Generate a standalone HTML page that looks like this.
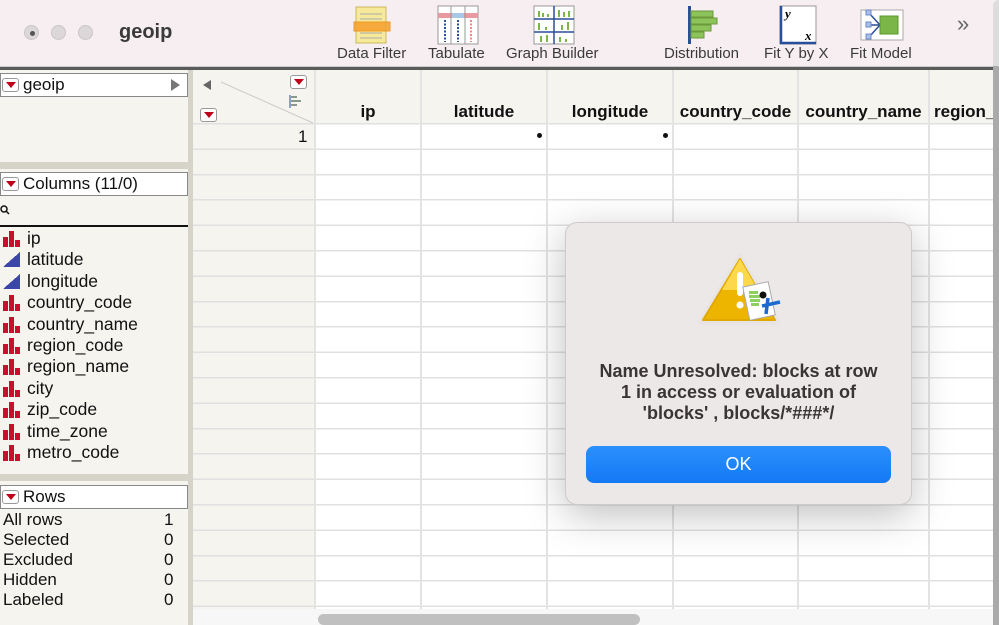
<!DOCTYPE html>
<html><head><meta charset="utf-8"><style>
*{margin:0;padding:0;box-sizing:border-box}
body{width:999px;height:625px;overflow:hidden;background:#fff;font-family:"Liberation Sans",Arial,sans-serif;position:relative}
.a{position:absolute}
.tb{left:0;top:0;width:999px;height:67px;background:#f6eef0}
.tl{top:25px;width:15px;height:15px;border-radius:50%;background:#dcd7d9;border:1px solid #cbc5c7}
.lbl{font-size:15px;color:#3a3a3a;top:45px;white-space:nowrap}
.panel{background:#f5f4ef}
.box{background:#fff;border:1px solid #888;font-size:17px;color:#111;height:24px;line-height:22px;padding-left:22px}
.dd{position:absolute;width:17px;height:14px;border:1px solid #999;border-radius:3px;background:#fff}
.dd:after{content:"";position:absolute;left:3px;top:3px;border-left:5px solid transparent;border-right:5px solid transparent;border-top:6px solid #c0001a}
.it{font-size:17.5px;color:#111;left:27px;height:21px;line-height:21px}
.tri{left:3px;width:17px;height:15px;background:linear-gradient(to top left,#3b47a8 50%,transparent 50%)}
.hd{font-size:17px;font-weight:bold;color:#111;top:102px;text-align:center}
.vl{top:70px;width:2px;height:539px;background:#e3e3e3}
.rv{font-size:17px;color:#111}
</style></head><body>
<div class="a tb"></div>
<div class="a tl" style="left:24px"></div><div class="a" style="left:30px;top:31px;width:5px;height:5px;border-radius:50%;background:#555"></div>
<div class="a tl" style="left:51px"></div>
<div class="a tl" style="left:78px"></div>
<div class="a" style="left:119px;top:21px;font-size:20px;font-weight:bold;color:#3a3a3a">geoip</div>
<svg class="a" style="left:352px;top:5px" width="40" height="40"><rect x="4" y="2" width="30" height="36" fill="#f6ea9a" stroke="#c9b860"/><g stroke="#aaa"><line x1="8" y1="9" x2="30" y2="9"/><line x1="8" y1="14" x2="30" y2="14"/><line x1="8" y1="28" x2="30" y2="28"/><line x1="8" y1="33" x2="30" y2="33"/></g><rect x="2" y="17" width="36" height="9" fill="#f7a02d" opacity=".85" stroke="#e88a10"/></svg>
<div class="a lbl" style="left:337px">Data Filter</div>
<svg class="a" style="left:437px;top:5px" width="42" height="40"><rect x="1" y="1" width="40" height="38" fill="#fff" stroke="#999"/><rect x="1" y="8" width="40" height="5" fill="#e99aa0"/><rect x="15" y="8" width="12" height="5" fill="#a8c8e8"/><g stroke="#2a4f9a" stroke-width="2" stroke-dasharray="2 1.5"><line x1="8" y1="15" x2="8" y2="37"/><line x1="21" y1="15" x2="21" y2="37"/></g><line x1="34" y1="15" x2="34" y2="37" stroke="#e88" stroke-width="2" stroke-dasharray="2 1.5"/><line x1="14" y1="1" x2="14" y2="39" stroke="#999"/><line x1="28" y1="1" x2="28" y2="39" stroke="#999"/></svg>
<div class="a lbl" style="left:428px">Tabulate</div>
<svg class="a" style="left:533px;top:5px" width="42" height="40"><rect x="1" y="1" width="40" height="38" fill="#fff" stroke="#999"/><g stroke="#2a4f9a" stroke-width="1.5"><line x1="1" y1="14" x2="41" y2="14"/><line x1="1" y1="27" x2="41" y2="27"/><line x1="21" y1="1" x2="21" y2="39"/></g><g fill="#7ab648"><rect x="5" y="6" width="2" height="6"/><rect x="9" y="8" width="2" height="4"/><rect x="14" y="9" width="2" height="3"/><rect x="25" y="5" width="2" height="7"/><rect x="30" y="7" width="2" height="5"/><rect x="35" y="6" width="2" height="6"/><rect x="5" y="18" width="2" height="7"/><rect x="12" y="22" width="2" height="3"/><rect x="28" y="20" width="2" height="5"/><rect x="34" y="17" width="2" height="8"/><rect x="7" y="31" width="2" height="6"/><rect x="13" y="30" width="2" height="7"/><rect x="26" y="32" width="2" height="5"/><rect x="32" y="34" width="2" height="3"/></g></svg>
<div class="a lbl" style="left:506px">Graph Builder</div>
<svg class="a" style="left:686px;top:5px" width="36" height="40"><rect x="2" y="1" width="3" height="38" fill="#2a4f9a"/><g fill="#8cc35a" stroke="#6a9a3a"><rect x="5" y="6" width="22" height="6"/><rect x="5" y="13" width="26" height="6"/><rect x="5" y="20" width="20" height="6"/><rect x="5" y="27" width="13" height="6"/></g></svg>
<div class="a lbl" style="left:664px">Distribution</div>
<svg class="a" style="left:778px;top:5px" width="40" height="40"><rect x="2" y="1" width="36" height="38" fill="#fff" stroke="#999"/><path d="M3 1V38H38" stroke="#2a4f9a" stroke-width="2.5" fill="none"/><text x="7" y="13" font-family="Liberation Serif" font-style="italic" font-weight="bold" font-size="13">y</text><text x="27" y="35" font-family="Liberation Serif" font-style="italic" font-weight="bold" font-size="13">x</text></svg>
<div class="a lbl" style="left:764px">Fit Y by X</div>
<svg class="a" style="left:860px;top:8px" width="44" height="36"><rect x="1" y="2" width="42" height="30" fill="#fff" stroke="#aaa"/><g stroke="#2a4f9a" stroke-width="1.5" fill="none"><path d="M9 5L20 17M9 17H20M9 29L20 17"/></g><g fill="#a8c0e8" stroke="#6a88c8"><rect x="6" y="2" width="5" height="5"/><rect x="6" y="14" width="5" height="5"/><rect x="6" y="26" width="5" height="5"/></g><rect x="20" y="8" width="18" height="18" fill="#7ab648" stroke="#5a9a2a"/></svg>
<div class="a lbl" style="left:850px">Fit Model</div>
<div class="a" style="left:957px;top:11px;font-size:22px;color:#666">»</div>
<div class="a" style="left:0;top:66px;width:993px;height:4px;background:#5a5a5a;border-top:1px solid #ccc"></div>
<div class="a" style="left:993px;top:66px;width:6px;height:559px;background:#aaa"></div>
<div class="a" style="left:993px;top:0;width:6px;height:66px;background:#ddd;border-top-left-radius:8px"></div>
<div class="a panel" style="left:0;top:70px;width:188px;height:555px"></div>
<div class="a" style="left:188px;top:70px;width:5px;height:555px;background:#d6d4c8"></div>
<div class="a" style="left:0;top:162px;width:188px;height:7px;background:#d6d4c8"></div>
<div class="a" style="left:0;top:474px;width:188px;height:7px;background:#d6d4c8"></div>
<div class="a box" style="left:0;top:73px;width:188px">geoip</div><div class="dd" style="left:2px;top:78px"></div>
<div class="a" style="left:171px;top:79px;border-top:6px solid transparent;border-bottom:6px solid transparent;border-left:9px solid #777"></div>
<div class="a box" style="left:0;top:172px;width:188px">Columns (11/0)</div><div class="dd" style="left:2px;top:177px"></div>
<svg class="a" style="left:0;top:205px" width="10" height="10"><circle cx="4" cy="4" r="3" stroke="#111" stroke-width="1.5" fill="none"/><line x1="6" y1="6" x2="9" y2="9" stroke="#111" stroke-width="1.5"/></svg>
<div class="a" style="left:0;top:225px;width:188px;height:2px;background:#111"></div>
<div id="cols"></div>
<div class="a box" style="left:0;top:485px;width:188px">Rows</div><div class="dd" style="left:2px;top:490px"></div>
<div class="a rv" style="left:3px;top:510px;line-height:20px">All rows<br>Selected<br>Excluded<br>Hidden<br>Labeled</div>
<div class="a rv" style="left:164px;top:510px;line-height:20px">1<br>0<br>0<br>0<br>0</div>
<div class="a panel" style="left:193px;top:70px;width:122px;height:555px"></div>
<div class="a" style="left:315px;top:70px;width:678px;height:54px;background:#f5f4ef"></div>
<div class="a" style="left:315px;top:124px;width:678px;height:485px;background:#fff"></div>
<div class="a" style="left:193px;top:123px;width:800px;height:486px;background:repeating-linear-gradient(to bottom,#e0e0e0 0,#e0e0e0 1.5px,transparent 1.5px,transparent 25.4px)"></div>
<div class="a" style="left:193px;top:609px;width:800px;height:16px;background:#f7f7f7"></div>
<div class="a" style="left:318px;top:614px;width:322px;height:11px;border-radius:6px;background:#c0c0c0"></div>
<div class="a vl" style="left:314px"></div><div class="a vl" style="left:420px"></div><div class="a vl" style="left:546px"></div><div class="a vl" style="left:672px"></div><div class="a vl" style="left:797px"></div><div class="a vl" style="left:928px"></div>
<svg class="a" style="left:193px;top:70px" width="122" height="54"><line x1="28" y1="12" x2="120" y2="53" stroke="#ccc"/><path d="M10 15L18 10V20Z" fill="#666"/><g stroke="#8a9a8a" stroke-width="2"><line x1="97" y1="25" x2="97" y2="38" stroke="#8aa0c8"/><line x1="98" y1="27" x2="104" y2="27"/><line x1="98" y1="31" x2="108" y2="31"/><line x1="98" y1="35" x2="104" y2="35"/></g></svg>
<div class="dd" style="left:290px;top:75px"></div><div class="dd" style="left:200px;top:108px"></div>
<div class="a hd" style="left:315px;width:106px">ip</div>
<div class="a hd" style="left:421px;width:126px">latitude</div>
<div class="a hd" style="left:547px;width:126px">longitude</div>
<div class="a hd" style="left:673px;width:125px">country_code</div>
<div class="a hd" style="left:798px;width:131px">country_name</div>
<div class="a hd" style="left:934px;text-align:left;overflow:hidden;white-space:nowrap;width:59px">region_</div>
<div class="a rv" style="left:298px;top:127px">1</div>
<div class="a" style="left:537px;top:133px;width:5px;height:5px;border-radius:50%;background:#111"></div>
<div class="a" style="left:663px;top:133px;width:5px;height:5px;border-radius:50%;background:#111"></div>
<div class="a" style="left:565px;top:222px;width:347px;height:283px;background:#ede8e8;border:1px solid #cfcaca;border-radius:12px;box-shadow:0 10px 40px rgba(0,0,0,.25)"></div>
<svg class="a" style="left:696px;top:254px" width="90" height="80">
<polygon points="44,3 81,68 5,68" fill="#e9e4e4" stroke="#e9e4e4" stroke-width="6" stroke-linejoin="round"/>
<polygon points="44,5 79,66 7,66" fill="#edb500" stroke="#e0a800" stroke-width="2" stroke-linejoin="round"/>
<polygon points="44,5 62,36 26,36" fill="#fcd84a"/>
<rect x="41" y="18" width="6" height="24" rx="3" fill="#fff"/><circle cx="44" cy="51" r="3.5" fill="#fff"/>
<rect x="50" y="30" width="26" height="34" fill="#fff" stroke="#aaa" transform="rotate(-12 63 47)"/>
<g fill="#8cd060"><rect x="53" y="37" width="9" height="3"/><rect x="53" y="41" width="11" height="3"/><rect x="54" y="45" width="10" height="3"/><rect x="55" y="49" width="8" height="3"/></g>
<circle cx="67" cy="41" r="3.5" fill="#111"/><path d="M66 52L84 48M72 44L70 60" stroke="#1a6ad0" stroke-width="3.5"/></svg>
<div class="a" style="left:565px;top:361px;width:347px;text-align:center;font-size:18px;font-weight:bold;color:#3a3535;line-height:21px">Name Unresolved: blocks at row<br>1 in access or evaluation of<br>'blocks' , blocks/*###*/</div>
<div class="a" style="left:586px;top:446px;width:305px;height:37px;border-radius:8px;background:linear-gradient(#2b90fc,#1479f5);color:#fff;font-size:18px;text-align:center;line-height:37px">OK</div>
<script>
var n=["ip","latitude","longitude","country_code","country_name","region_code","region_name","city","zip_code","time_zone","metro_code"],h="";
n.forEach(function(t,i){var y=228+i*21.4;var ic=(i==1||i==2)?'<div class="a tri" style="top:'+(y+3)+'px"></div>':'<svg class="a" style="left:3px;top:'+(y+3)+'px" width="18" height="16"><rect x="0" y="6" width="5" height="10" fill="#c8102e"/><rect x="6" y="0" width="5" height="16" fill="#c8102e"/><rect x="12" y="9" width="5" height="7" fill="#c8102e"/></svg>';h+=ic+'<div class="a it" style="top:'+y+'px">'+t+'</div>';});
document.getElementById("cols").innerHTML=h;
</script>
</body></html>
